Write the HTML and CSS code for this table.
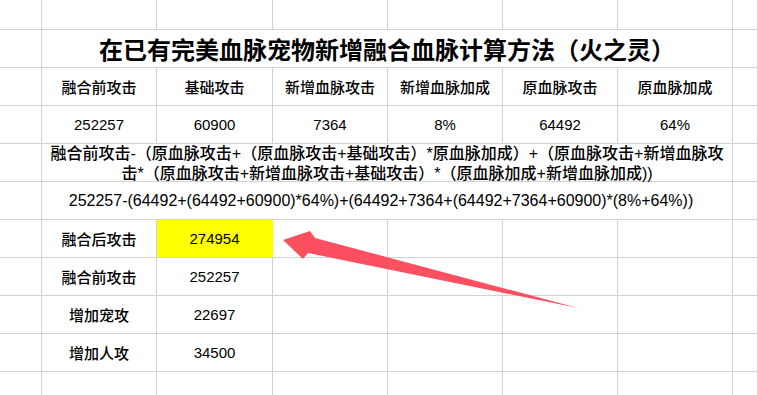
FILE: index.html
```html
<!DOCTYPE html>
<html lang="zh">
<head>
<meta charset="utf-8">
<link rel="stylesheet" href="styles.css">
</head>
<body>
<div class="sheet">
  <div class="c"></div><div class="c"></div><div class="c"></div><div class="c"></div><div class="c"></div><div class="c"></div><div class="c"></div><div class="c"></div>

  <div class="c"></div><div class="c span title">在已有完美血脉宠物新增融合血脉计算方法（火之灵）</div><div class="c"></div>

  <div class="c"></div>
  <div class="c">融合前攻击</div><div class="c">基础攻击</div><div class="c">新增血脉攻击</div><div class="c">新增血脉加成</div><div class="c">原血脉攻击</div><div class="c">原血脉加成</div>
  <div class="c"></div>

  <div class="c"></div>
  <div class="c">252257</div><div class="c">60900</div><div class="c">7364</div><div class="c">8%</div><div class="c">64492</div><div class="c">64%</div>
  <div class="c"></div>

  <div class="c"></div><div class="c span formula">融合前攻击-（原血脉攻击+（原血脉攻击+基础攻击）*原血脉加成）+（原血脉攻击+新增血脉攻<br>击*（原血脉攻击+新增血脉攻击+基础攻击）*（原血脉加成+新增血脉加成))</div><div class="c"></div>

  <div class="c"></div><div class="c span calc">252257-(64492+(64492+60900)*64%)+(64492+7364+(64492+7364+60900)*(8%+64%))</div><div class="c"></div>

  <div class="c"></div><div class="c">融合后攻击</div><div class="c hl">274954</div><div class="c"></div><div class="c"></div><div class="c"></div><div class="c"></div><div class="c"></div>
  <div class="c"></div><div class="c">融合前攻击</div><div class="c">252257</div><div class="c"></div><div class="c"></div><div class="c"></div><div class="c"></div><div class="c"></div>
  <div class="c"></div><div class="c">增加宠攻</div><div class="c">22697</div><div class="c"></div><div class="c"></div><div class="c"></div><div class="c"></div><div class="c"></div>
  <div class="c"></div><div class="c">增加人攻</div><div class="c">34500</div><div class="c"></div><div class="c"></div><div class="c"></div><div class="c"></div><div class="c"></div>
  <div class="c"></div><div class="c"></div><div class="c"></div><div class="c"></div><div class="c"></div><div class="c"></div><div class="c"></div><div class="c"></div>
</div>
<svg class="arrow" width="758" height="395" viewBox="0 0 758 395">
  <polygon points="283,240 310,231 315,238 578,308 308,253 303,259" fill="#fc4f5f"/>
</svg>
</body>
</html>
```
FILE: styles.css
```css
html, body {
  margin: 0;
  padding: 0;
  background: #fff;
}
body {
  width: 758px;
  height: 395px;
  overflow: hidden;
  position: relative;
  font-family: "Liberation Sans", "Noto Sans CJK SC", sans-serif;
  color: #000;
}
.sheet {
  display: grid;
  grid-template-columns: 42px 115px 116px 115px 115px 115px 115px 25px;
  grid-template-rows: 30px;
  grid-auto-rows: 38px;
}
.c {
  box-sizing: border-box;
  border-right: 1px solid #d2d2d2;
  border-bottom: 1px solid #d2d2d2;
  display: flex;
  align-items: center;
  justify-content: center;
  font-size: 15px;
  font-weight: 500;
  white-space: nowrap;
  overflow: visible;
}
.span {
  grid-column: span 6;
  text-align: center;
}
.title {
  font-size: 24px;
  font-weight: bold;
}
.formula {
  font-size: 16px;
  line-height: 20px;
  align-items: flex-start;
}
.calc {
  font-size: 16px;
  padding-right: 12px;
}
.hl {
  background: #ffff00;
  border-right-color: #ffff00;
}
.arrow {
  position: absolute;
  left: 0;
  top: 0;
  pointer-events: none;
}
```
